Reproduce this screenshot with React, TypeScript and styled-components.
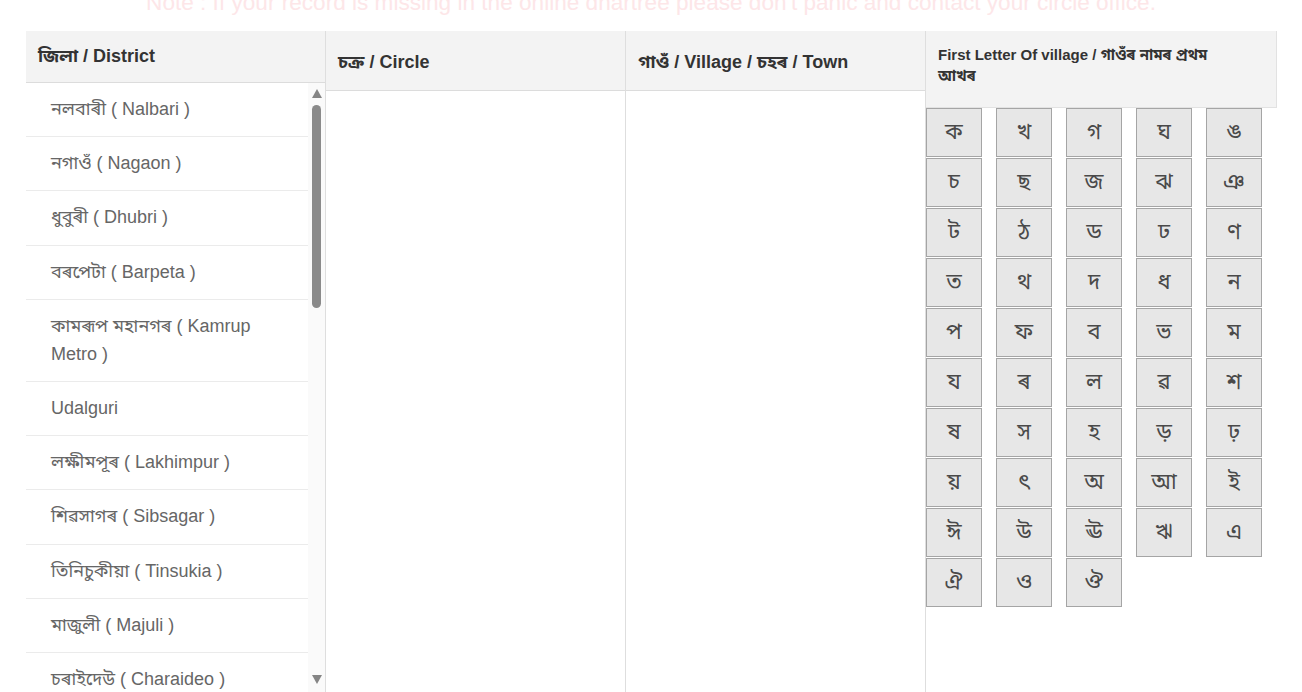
import React from 'react';
import styled, { createGlobalStyle } from 'styled-components';

const GlobalStyle = createGlobalStyle`
  html, body {
    margin: 0;
    padding: 0;
    overflow: hidden;
    background: #fff;
    font-family: "Liberation Sans", Arial, "Noto Sans Bengali", "Noto Sans", sans-serif;
  }
`;

const Page = styled.div`
  height: 100vh;
  display: flex;
  flex-direction: column;
`;

const Note = styled.p`
  margin: -10px 0 16px;
  font-size: 22.6px;
  line-height: 25px;
  text-align: center;
  color: #fde6e8;
  white-space: nowrap;
`;

const Table = styled.div`
  flex: 1;
  min-height: 0;
  margin-left: 26px;
  display: grid;
  grid-template-columns: 300px 300px 300px 351px;
`;

const Column = styled.section<{ $last?: boolean }>`
  display: flex;
  flex-direction: column;
  min-height: 0;
  border-right: ${({ $last }) => ($last ? 'none' : '1px solid #dedede')};
`;

const Header = styled.div<{ $height: number; $shift?: number }>`
  flex: none;
  box-sizing: border-box;
  height: ${({ $height }) => $height}px;
  display: flex;
  align-items: center;
  padding: ${({ $shift = 0 }) => $shift}px 12px 0;
  background: #f3f3f3;
  border-bottom: 1px solid #dcdcdc;
  color: #333;
  font-size: 18px;
  font-weight: bold;
`;

const LetterHeader = styled.div`
  flex: none;
  box-sizing: border-box;
  height: 77px;
  padding: 13px 40px 0 12px;
  background: #f3f3f3;
  border-right: 1px solid #e2e2e2;
  border-bottom: 1px solid #e2e2e2;
  color: #333;
  font-size: 15px;
  line-height: 21px;
  font-weight: bold;
`;

const ListArea = styled.div`
  flex: 1;
  min-height: 0;
  display: flex;
`;

const DistrictList = styled.ul`
  flex: 1;
  min-width: 0;
  margin: 0;
  padding: 0;
  list-style: none;
  overflow: hidden;
`;

const DistrictItem = styled.li`
  padding: 12px 25px 13.2px;
  border-bottom: 1px solid #ebebeb;
  color: #666;
  font-size: 18px;
  line-height: 28px;
`;

const ScrollBar = styled.div`
  flex: none;
  width: 17px;
  display: flex;
  flex-direction: column;
  align-items: center;
  background: #fafafa;
`;

const ScrollArrow = styled.div<{ $down?: boolean }>`
  flex: none;
  width: 0;
  height: 0;
  border-left: 5px solid transparent;
  border-right: 5px solid transparent;
  ${({ $down }) =>
    $down
      ? 'border-top: 9px solid #858585; margin-bottom: 8px;'
      : 'border-bottom: 9px solid #858585; margin-top: 6px;'}
`;

const ScrollTrack = styled.div`
  flex: 1;
  min-height: 0;
  display: flex;
  justify-content: center;
`;

const ScrollThumb = styled.div<{ $size: number }>`
  width: 9px;
  height: ${({ $size }) => $size}px;
  margin-top: 7px;
  border-radius: 5px;
  background: #8a8a8a;
`;

const LetterGrid = styled.div`
  display: grid;
  grid-template-columns: repeat(5, 56px);
  grid-auto-rows: 49px;
  column-gap: 14px;
  row-gap: 1px;
`;

const LetterButton = styled.button`
  box-sizing: border-box;
  margin: 0;
  padding: 2px 0 0;
  background: #e7e7e7;
  border: 1px solid #a5a5a5;
  color: #4a4a4a;
  font-family: inherit;
  font-size: 22px;
  cursor: pointer;

  &:hover {
    background: #dcdcdc;
  }
`;

const districts = [
  'নলবাৰী ( Nalbari )',
  'নগাওঁ ( Nagaon )',
  'ধুবুৰী ( Dhubri )',
  'বৰপেটা ( Barpeta )',
  'কামৰূপ মহানগৰ ( Kamrup Metro )',
  'Udalguri',
  'লক্ষীমপূৰ ( Lakhimpur )',
  'শিৱসাগৰ ( Sibsagar )',
  'তিনিচুকীয়া ( Tinsukia )',
  'মাজুলী ( Majuli )',
  'চৰাইদেউ ( Charaideo )',
  'কামৰূপ ( Kamrup )',
  'গোলাঘাট ( Golaghat )',
  'যোৰহাট ( Jorhat )',
  'ডিব্ৰুগড় ( Dibrugarh )',
  'শোণিতপুৰ ( Sonitpur )',
  'দৰং ( Darrang )',
  'মৰিগাঁও ( Morigaon )',
  'গোৱালপাৰা ( Goalpara )',
  'কোকৰাঝাৰ ( Kokrajhar )',
  'বঙাইগাঁও ( Bongaigaon )',
  'চিৰাং ( Chirang )',
  'বাক্সা ( Baksa )',
  'ধেমাজি ( Dhemaji )',
  'বিশ্বনাথ ( Biswanath )',
  'হোজাই ( Hojai )',
  'দক্ষিণ শালমাৰা ( South Salmara )',
  'হাইলাকান্দি ( Hailakandi )',
  'কাছাৰ ( Cachar )',
  'কৰিমগঞ্জ ( Karimganj )',
  'কাৰ্বি আংলং ( Karbi Anglong )',
];

const letters = [
  'ক', 'খ', 'গ', 'ঘ', 'ঙ',
  'চ', 'ছ', 'জ', 'ঝ', 'ঞ',
  'ট', 'ঠ', 'ড', 'ঢ', 'ণ',
  'ত', 'থ', 'দ', 'ধ', 'ন',
  'প', 'ফ', 'ব', 'ভ', 'ম',
  'য', 'ৰ', 'ল', 'ৱ', 'শ',
  'ষ', 'স', 'হ', 'ড়', 'ঢ়',
  'য়', 'ৎ', 'অ', 'আ', 'ই',
  'ঈ', 'উ', 'ঊ', 'ঋ', 'এ',
  'ঐ', 'ও', 'ঔ',
];

export default function App() {
  return (
    <Page>
      <GlobalStyle />
      <Note>
        Note : If your record is missing in the online dhartree please don't panic and contact your circle office.
      </Note>
      <Table>
        <Column>
          <Header $height={52} $shift={1}>জিলা / District</Header>
          <ListArea>
            <DistrictList>
              {districts.map((d) => (
                <DistrictItem key={d}>{d}</DistrictItem>
              ))}
            </DistrictList>
            <ScrollBar>
              <ScrollArrow />
              <ScrollTrack>
                <ScrollThumb $size={203} />
              </ScrollTrack>
              <ScrollArrow $down />
            </ScrollBar>
          </ListArea>
        </Column>
        <Column>
          <Header $height={60} $shift={5}>চক্ৰ / Circle</Header>
        </Column>
        <Column>
          <Header $height={60} $shift={5}>গাওঁ / Village / চহৰ / Town</Header>
        </Column>
        <Column $last>
          <LetterHeader>First Letter Of village / গাওঁৰ নামৰ প্ৰথম আখৰ</LetterHeader>
          <LetterGrid>
            {letters.map((l) => (
              <LetterButton key={l}>{l}</LetterButton>
            ))}
          </LetterGrid>
        </Column>
      </Table>
    </Page>
  );
}
